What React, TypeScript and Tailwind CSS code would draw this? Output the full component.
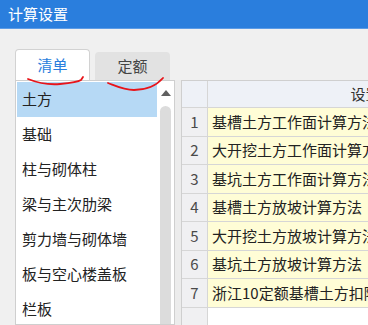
import React from "react";

const categories = [
  "土方",
  "基础",
  "柱与砌体柱",
  "梁与主次肋梁",
  "剪力墙与砌体墙",
  "板与空心楼盖板",
  "栏板",
];

const rows = [
  "基槽土方工作面计算方法",
  "大开挖土方工作面计算方法",
  "基坑土方工作面计算方法",
  "基槽土方放坡计算方法",
  "大开挖土方放坡计算方法",
  "基坑土方放坡计算方法",
  "浙江10定额基槽土方扣除方法",
];

const font = { fontFamily: '"Noto Sans CJK SC", "Noto Sans", sans-serif' };

const CategoryList = () => (
  <div className="w-[160px] h-full bg-white border border-[#cfcfcf] flex pt-[1px] pl-[1px]">
    <div className="w-[140px] flex flex-col">
      {categories.map((name, i) => (
        <div
          key={name}
          className={`h-[35px] shrink-0 flex items-center pl-[5px] text-[15px] text-[#222] ${
            i === 0 ? "bg-[#b6d9f5]" : ""
          }`}
        >
          {name}
        </div>
      ))}
    </div>
    <div className="w-[17px] flex flex-col items-center pt-[8px]">
      <div className="w-0 h-0 border-l-[5px] border-r-[5px] border-b-[6px] border-l-transparent border-r-transparent border-b-[#606060]" />
      <div className="mt-[10px] w-[11px] flex-1 bg-[#dcdcdc] rounded-t-full" />
    </div>
  </div>
);

const SettingsTable = () => (
  <div className="flex-1 h-full overflow-hidden border-l border-t border-[#cfcfcf] bg-white">
    <div className="w-[600px]">
      <div className="flex h-[27px] border-b border-[#d6d6d6]">
        <div className="w-[26px] bg-[#eef1f7] border-r border-[#d6d6d6]" />
        <div className="w-[346px] bg-[#eef1f7] border-r border-[#d6d6d6] flex items-center justify-center text-[15px] text-[#333]">
          设置描述
        </div>
      </div>
      {rows.map((text, i) => (
        <div key={text} className="flex h-[28.5px] border-b border-[#d6d6d6]">
          <div className="w-[26px] bg-[#f0f0f2] border-r border-[#d6d6d6] flex items-center justify-center text-[15px] text-[#4a4a4a]">
            {i + 1}
          </div>
          <div className="w-[346px] bg-[#fffdd6] flex items-center pl-[4px] text-[15px] text-[#222] whitespace-nowrap">
            {text}
          </div>
        </div>
      ))}
      <div className="flex h-[40px]">
        <div className="w-[26px] bg-[#f0f0f2] border-r border-[#d6d6d6]" />
        <div className="w-[346px] bg-white" />
      </div>
    </div>
  </div>
);

export default function App() {
  return (
    <div
      className="relative w-[368px] h-[325px] overflow-hidden bg-[#f0f0f0] flex flex-col"
      style={font}
    >
      <div className="h-[29px] shrink-0 bg-[#2a7edd] border-b border-[#5b9be6] flex items-center pl-[8px] text-white text-[15px]">
        计算设置
      </div>
      <div className="flex-1 flex flex-col pt-[20px] pl-[15px] min-h-0">
        <div className="h-[31px] shrink-0 flex items-end">
          <div className="w-[75px] h-[31px] bg-white border border-b-0 border-[#d2d2d2] rounded-t-[4px] flex items-center justify-center text-[15px] text-[#2a7edd]">
            清单
          </div>
          <div className="ml-[5px] w-[75px] h-[28px] bg-[#e2e2e2] rounded-t-[4px] flex items-center justify-center text-[15px] text-[#444]">
            定额
          </div>
        </div>
        <div className="flex-1 flex min-h-0">
          <CategoryList />
          <div className="w-[6px] bg-[#ececec]" />
          <SettingsTable />
        </div>
      </div>
      <svg
        className="absolute left-0 top-0 pointer-events-none"
        width="368"
        height="325"
        viewBox="0 0 368 325"
      >
        <path
          d="M28 79 C38 83 48 85 60 84 C70 83 78 82 81 80 L83 77"
          fill="none"
          stroke="#e8141a"
          strokeWidth="1.8"
          strokeLinecap="round"
        />
        <path
          d="M108 83 C116 86 124 90 134 90 C146 90 156 86 163 78"
          fill="none"
          stroke="#e8141a"
          strokeWidth="1.8"
          strokeLinecap="round"
        />
      </svg>
    </div>
  );
}
